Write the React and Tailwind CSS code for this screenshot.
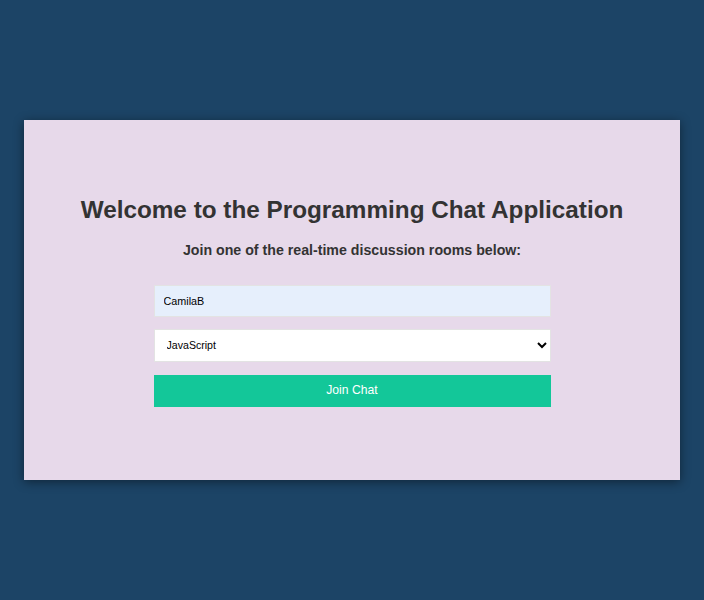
import React, { useState } from "react";

const rooms = ["JavaScript", "Python", "PHP", "C#", "Ruby", "Java"];

export default function App() {
  const [username, setUsername] = useState("CamilaB");
  const [room, setRoom] = useState("JavaScript");

  return (
    <div
      className="flex h-screen w-full items-center justify-center bg-[#1c4466] px-6"
      style={{ fontFamily: '"Liberation Sans", Arial, sans-serif' }}
    >
      {/* card */}
      <div className="flex h-[360px] w-full flex-col items-center justify-center bg-[#e7d9ea] shadow-[0_2px_10px_rgba(0,0,0,0.45)]">
        <h1 className="text-[24.3px] leading-8 font-bold text-[#333333]">
          Welcome to the Programming Chat Application
        </h1>
        <p className="mt-3 text-[14.2px] leading-6 font-bold text-[#333333]">
          Join one of the real-time discussion rooms below:
        </p>

        <form className="mt-[23px] flex w-[397px] flex-col gap-3" onSubmit={(e) => e.preventDefault()}>
          <input
            type="text"
            value={username}
            onChange={(e) => setUsername(e.target.value)}
            className="h-8 w-full border border-[#e3e3e3] bg-[#e6effc] px-[9px] text-[10.8px] text-black outline-none"
          />
          <select
            value={room}
            onChange={(e) => setRoom(e.target.value)}
            className="h-[33px] w-full border border-[#e3e3e3] bg-white pl-[8px] pr-1 text-[10.6px] text-black outline-none"
            style={{ appearance: "auto" }}
          >
            {rooms.map((r) => (
              <option key={r} value={r}>
                {r}
              </option>
            ))}
          </select>
          <button
            type="submit"
            className="mt-px h-8 w-full cursor-pointer bg-[#13c799] text-[12.2px] text-white"
          >
            Join Chat
          </button>
        </form>
      </div>
    </div>
  );
}
